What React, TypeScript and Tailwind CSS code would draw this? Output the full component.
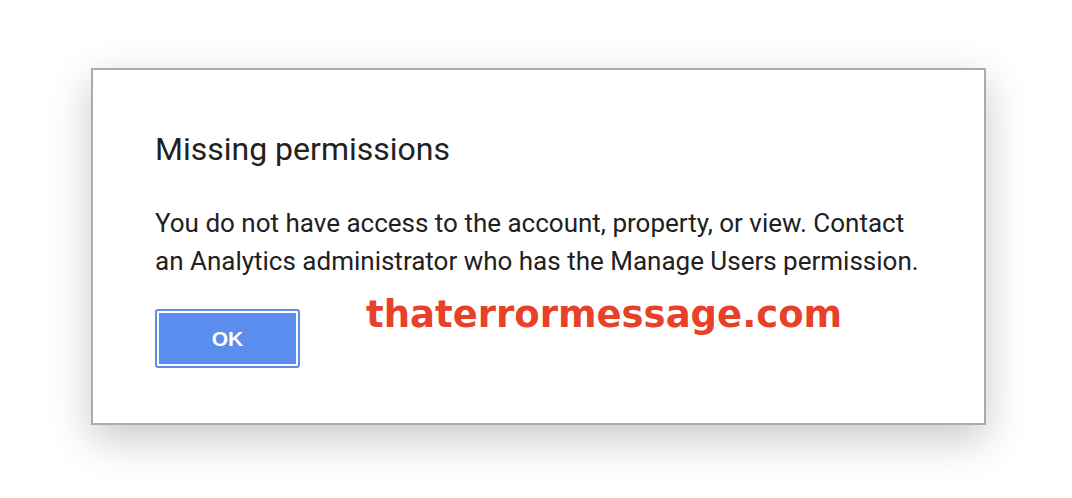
import React from "react";

const App: React.FC = () => {
  return (
    <div className="w-[1072px] h-[498px] bg-white pt-[68px] pl-[91px]" style={{ fontFamily: "Roboto, sans-serif" }}>
      <div className="w-[895px] h-[357px] border-2 border-[#ababab] bg-white shadow-[0_14px_40px_rgba(0,0,0,0.22)] pl-[62px] pt-[59px]">
        <h1 className="text-[32px] leading-[40px] text-[#212121]">Missing permissions</h1>
        <p className="mt-[35px] text-[26px] leading-[38px] text-[#212121]">
          You do not have access to the account, property, or view. Contact
          <br />
          an Analytics administrator who has the Manage Users permission.
        </p>
        <div className="mt-[29px] flex items-start">
          <button className="w-[145px] h-[59px] rounded-[3px] border-2 border-[#5b8def] p-[2px] bg-white">
            <span
              className="flex h-full w-full items-center justify-center bg-[#5a8dee] text-[21px] font-bold text-white"
              style={{ fontFamily: "'Liberation Sans', Arial, sans-serif" }}
            >
              OK
            </span>
          </button>
          <span
            className="ml-[66px] -mt-[13px] text-[37px] leading-[37px] font-bold text-[#e8412a]"
            style={{ fontFamily: "'DejaVu Sans', sans-serif" }}
          >
            thaterrormessage.com
          </span>
        </div>
      </div>
    </div>
  );
};

export default App;
